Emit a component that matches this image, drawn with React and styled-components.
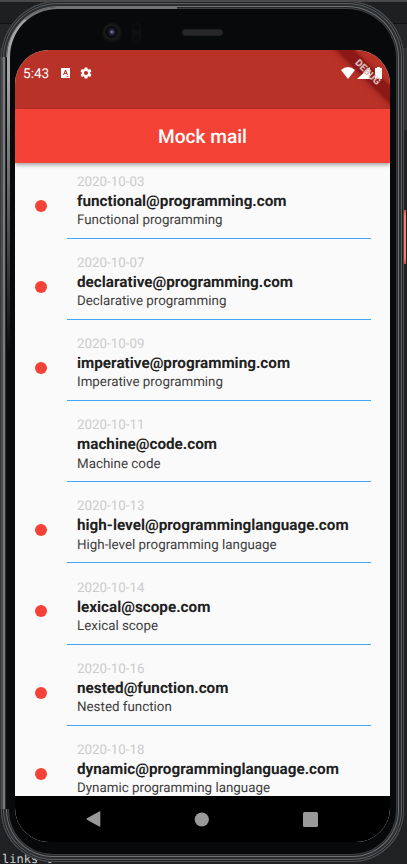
import React from 'react';
import styled, { createGlobalStyle } from 'styled-components';

const GlobalStyle = createGlobalStyle`
  * { box-sizing: border-box; }
  body {
    margin: 0;
    background: #1e1f20;
    overflow: hidden;
    font-family: Roboto, sans-serif;
    text-rendering: geometricPrecision;
  }
`;

const Desktop = styled.main`
  position: relative;
  width: 407px;
  height: 864px;
  overflow: hidden;
  background: linear-gradient(#484848 0 2px, #1e1f20 2px 23px, #111 23px 24px, #252627 24px 48px, #303132 48px 130px, #202122 130px 100%);
`;

const EditorText = styled.span`
  position: absolute;
  left: 2px;
  top: 852px;
  font: 12px/14px "DejaVu Sans Mono", monospace;
  color: #d0d0d0;
  white-space: pre;
`;

const PowerKey = styled.span`
  position: absolute;
  left: 403px;
  top: 210px;
  width: 3px;
  height: 54px;
  background: linear-gradient(#d84f3d, #fa8069 6px 48px, #d84f3d);
`;

const Phone = styled.div`
  position: relative;
  width: 403px;
  height: 861px;
  margin-left: 1px;
  top: 1px;
  padding: 49px 14px 20px;
  border-radius: 57px 57px 52px 52px;
  background: #08090b;
  box-shadow:
    inset 0 0 0 1px #4e5052,
    inset 0 0 0 2px #1e2022,
    inset 0 0 0 3px #5c5e60,
    inset 0 0 0 5px #2b2e30,
    inset 0 0 0 6px #6f7173,
    inset 0 0 0 7px #26282a,
    inset 0 0 0 8px #3c3e40;
`;

const LeftRail = styled.span`
  position: absolute;
  left: -1px;
  top: 56px;
  width: 10px;
  height: 752px;
  background: linear-gradient(90deg, #37393b 0 1px, #4b4d4f 1px 3px, #777b80 3px 5px, #2a2c2e 5px 6px, #0b0c0e 6px);
`;

const Highlight = styled.span`
  position: absolute;
  left: 6px;
  top: 6px;
  width: 170px;
  height: 400px;
  border-top: 2px solid #737373;
  border-left: 3px solid #a5a6a3;
  border-top-left-radius: 50px;
  mask-image: linear-gradient(160deg, #000 15%, transparent 75%);
`;

const Camera = styled.span`
  position: absolute;
  left: 101px;
  top: 22px;
  width: 20px;
  height: 20px;
  border-radius: 50%;
  background: radial-gradient(circle at 49% 45%, #7c7e8b 0 0.5px, #24263c 2px 3px, #0a0b0d 4px 5px, #19191b 7px, #101012 10px);
`;

const Sensor = styled.span`
  position: absolute;
  left: 131px;
  top: 22px;
  width: 9px;
  height: 20px;
  border-radius: 5px;
  background: radial-gradient(circle at 50% 23%, #0a0a0c 3px, transparent 4px),
    radial-gradient(circle at 50% 77%, #0a0a0c 3px, transparent 4px), #101012;
`;

const Speaker = styled.span`
  position: absolute;
  left: 181px;
  top: 28px;
  width: 41px;
  height: 7px;
  border: 1px solid #1e1e20;
  border-radius: 3px;
  background: #272728;
`;

const Screen = styled.section`
  position: relative;
  width: 375px;
  height: 792px;
  display: flex;
  flex-direction: column;
  overflow: hidden;
  border-radius: 34px;
  background: #fafafa;
`;

const StatusBar = styled.header`
  flex: 0 0 59px;
  display: flex;
  align-items: flex-start;
  justify-content: space-between;
  padding: 15px 8px 0 8px;
  background: #b93228;
  color: #fff;
`;

const StatusGroup = styled.div`
  position: relative;
  z-index: ${(p) => (p.$under ? 0 : 2)};
  display: flex;
  align-items: center;
  height: 16px;
`;

const Clock = styled.span`
  width: 38px;
  font-size: 13.6px;
  line-height: 16px;
  padding-top: 2px;
`;

const Glyph = styled.svg`
  display: block;
  flex: none;
  width: ${(p) => p.$w}px;
  height: ${(p) => p.$h}px;
  margin-left: ${(p) => p.$gap || 0}px;
  fill: currentColor;
`;

const RibbonBand = styled.span`
  position: absolute;
  right: -31px;
  top: 17px;
  width: 106px;
  height: 12px;
  transform: rotate(45deg);
  background: rgba(122, 14, 16, 0.72);
  box-shadow: 0 0 6px rgba(90, 0, 0, 0.6);
`;

const RibbonLabel = styled.span`
  position: absolute;
  z-index: 3;
  right: -30px;
  top: 17px;
  width: 106px;
  height: 12px;
  transform: rotate(45deg);
  color: #d9bcba;
  font-size: 9.9px;
  font-weight: 900;
  line-height: 12px;
  text-align: center;
`;

const AppBar = styled.div`
  position: relative;
  z-index: 3;
  flex: 0 0 53.5px;
  display: flex;
  align-items: center;
  justify-content: center;
  padding-top: 1px;
  background: #f44336;
  box-shadow: 0 2px 4px rgba(0, 0, 0, 0.35);
`;

const Title = styled.h1`
  margin: 0;
  color: #fff;
  font-size: 19.1px;
  font-weight: 500;
  line-height: 25px;
`;

const MailList = styled.ul`
  flex: 1;
  min-height: 0;
  margin: 0;
  padding: 0;
  overflow: hidden;
  list-style: none;
`;

const MailItem = styled.li`
  display: flex;
  height: 76.2px;
  margin-bottom: 5px;
  padding-right: 19.5px;
`;

const Marker = styled.div`
  width: 52px;
  padding: 37px 0 0 20px;
`;

const UnreadDot = styled.span`
  display: block;
  width: 12px;
  height: 12px;
  border-radius: 50%;
  background: #f44336;
`;

const MailBody = styled.div`
  flex: 1;
  padding: 11.2px 0 0 10px;
  border-bottom: 1px solid #42a5f5;
  white-space: nowrap;
`;

const MailDate = styled.div`
  color: #cbcbcb;
  font-size: 13.37px;
  line-height: 17px;
`;

const Sender = styled.div`
  color: #212121;
  font-size: 15.28px;
  font-weight: 700;
  line-height: 20.4px;
`;

const Subject = styled.div`
  color: #3d3d3d;
  font-size: 13.37px;
  line-height: 19px;
`;

const NavBar = styled.nav`
  flex: 0 0 46px;
  display: flex;
  align-items: center;
  justify-content: space-between;
  padding: 0 72.5px 0 71px;
  background: #000;
  color: #999;
`;

const mails = [
  ['2020-10-03', 'functional@programming.com', 'Functional programming', true],
  ['2020-10-07', 'declarative@programming.com', 'Declarative programming', true],
  ['2020-10-09', 'imperative@programming.com', 'Imperative programming', true],
  ['2020-10-11', 'machine@code.com', 'Machine code', false],
  ['2020-10-13', 'high-level@programminglanguage.com', 'High-level programming language', true],
  ['2020-10-14', 'lexical@scope.com', 'Lexical scope', true],
  ['2020-10-16', 'nested@function.com', 'Nested function', true],
  ['2020-10-18', 'dynamic@programminglanguage.com', 'Dynamic programming language', true],
];

export default function App() {
  return (
    <>
      <GlobalStyle />
      <Desktop>
        <EditorText>links t</EditorText>
        <PowerKey />
        <Phone>
          <LeftRail />
          <Highlight />
          <Camera />
          <Sensor />
          <Speaker />
          <Screen>
            <StatusBar>
              <StatusGroup>
                <Clock>5:43</Clock>
                <Glyph $w={9} $h={10} viewBox="0 0 9 10">
                  <path fillRule="evenodd" d="M0 0H9V10H0ZM4 2L2 7H3L3.4 6H5.6L6 7H7L5 2ZM4.5 3.4L5.2 5.2H3.8ZM5.5 8V8.7H7.5V8Z" />
                </Glyph>
                <Glyph $w={14} $h={14} $gap={9} viewBox="0 0 24 24">
                  <path d="M19.14 12.94c.04-.3.06-.61.06-.94s-.02-.64-.07-.94l2.03-1.58a.49.49 0 0 0 .12-.61l-1.92-3.32a.49.49 0 0 0-.59-.22l-2.39.96a7 7 0 0 0-1.62-.94L14.4 2.81a.48.48 0 0 0-.48-.41h-3.84a.47.47 0 0 0-.47.41l-.36 2.54a7.2 7.2 0 0 0-1.62.94l-2.39-.96a.48.48 0 0 0-.59.22L2.74 8.87a.48.48 0 0 0 .12.61l2.03 1.58a6 6 0 0 0 0 1.88l-2.03 1.58a.49.49 0 0 0-.12.61l1.92 3.32c.12.22.37.29.59.22l2.39-.96c.5.38 1.03.7 1.62.94l.36 2.54c.05.24.24.41.48.41h3.84c.24 0 .44-.17.47-.41l.36-2.54a7 7 0 0 0 1.62-.94l2.39.96c.22.08.47 0 .59-.22l1.92-3.32a.48.48 0 0 0-.12-.61ZM12 15.6a3.6 3.6 0 1 1 0-7.2 3.6 3.6 0 0 1 0 7.2Z" />
                </Glyph>
              </StatusGroup>
              <StatusGroup>
                <Glyph $w={14} $h={12} viewBox="0 0 14 12">
                  <path d="M0 3Q7-3 14 3L7 12Z" />
                </Glyph>
                <Glyph $w={13} $h={12} $gap={2} viewBox="0 0 13 12">
                  <path d="M0 12L13 0V12Z" />
                </Glyph>
                <Glyph $w={7} $h={12} $gap={5} viewBox="0 0 7 12">
                  <path d="M2 0H5V1H7V12H0V1H2Z" />
                </Glyph>
              </StatusGroup>
            </StatusBar>
            <RibbonBand />
            <RibbonLabel>DEBUG</RibbonLabel>
            <AppBar>
              <Title>Mock mail</Title>
            </AppBar>
            <MailList>
              {mails.map(([date, sender, subject, unread]) => (
                <MailItem key={date}>
                  <Marker>{unread && <UnreadDot />}</Marker>
                  <MailBody>
                    <MailDate>{date}</MailDate>
                    <Sender>{sender}</Sender>
                    <Subject>{subject}</Subject>
                  </MailBody>
                </MailItem>
              ))}
            </MailList>
            <NavBar>
              <Glyph $w={15} $h={16} viewBox="0 0 15 16">
                <path d="M13.2.5Q14.3 0 14.3 1.2V14.8Q14.3 16 13.2 15.5L1 8.8Q0 8 1 7.2Z" />
              </Glyph>
              <Glyph $w={15} $h={15} viewBox="0 0 15 15">
                <circle cx="7.8" cy="7.5" r="7.1" />
              </Glyph>
              <Glyph $w={15} $h={15} viewBox="0 0 15 15">
                <rect width="15" height="15" rx="1.5" />
              </Glyph>
            </NavBar>
          </Screen>
        </Phone>
      </Desktop>
    </>
  );
}
